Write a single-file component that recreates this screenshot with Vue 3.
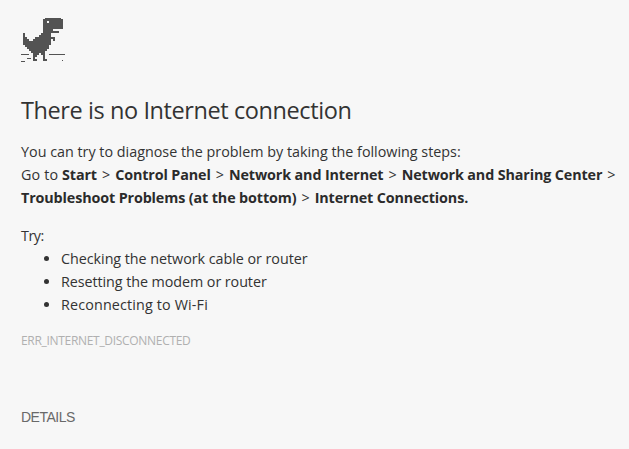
<script setup>
// Pixel-art dinosaur, one character per 2px cell
const rows = [
  '...........########.',
  '..........##########',
  '..........##.#######',
  '..........##########',
  '..........##########',
  '..........##########',
  '..........#####.....',
  '..........########..',
  '#........#####......',
  '#.......######......',
  '##....##########....',
  '###..#########.#....',
  '##############......',
  '##############......',
  '.############.......',
  '..###########.......',
  '...#########........',
  '....#######.........',
  '.....###.##.........',
  '.....##...#.........',
  '.....#....#.........',
  '.....##...##........',
]
const path = rows
  .map((row, y) =>
    [...row.matchAll(/#+/g)]
      .map((m) => `M${m.index * 2 + 2} ${y * 2}h${m[0].length * 2}v2h-${m[0].length * 2}z`)
      .join(''),
  )
  .join('')
const tips = [
  { text: 'Checking the network cable or router', cls: 'tip-a' },
  { text: 'Resetting the modem or router', cls: 'tip-b' },
  { text: 'Reconnecting to Wi-Fi', cls: 'tip-c' },
]
</script>

<template>
  <main class="page">
    <svg class="dino" width="46" height="45" viewBox="0 1 46 45" shape-rendering="crispEdges">
      <path :d="path" />
      <path d="M0 37h8v1H0zM28 37h16v1H28zM6 41h4v1H6zM0 44h4v1H0zM41 43h1v1h-1z" />
    </svg>
    <h1>There is no Internet connection</h1>
    <p class="steps">
      <span class="line">You can try to diagnose the problem by taking the following steps:</span>
      <span class="line"><span class="go">Go to</span> <b>Start</b> <i>&gt;</i> <b>Control Panel</b> <i>&gt;</i> <b>Network and Internet</b> <i>&gt;</i> <b>Network and Sharing Center</b> <i>&gt;</i></span>
      <span class="line"><b>Troubleshoot Problems (at the bottom)</b> <i>&gt;</i> <b>Internet Connections.</b></span>
    </p>
    <p class="try">Try:</p>
    <ul>
      <li v-for="t in tips" :key="t.text" :class="t.cls">{{ t.text }}</li>
    </ul>
    <p class="code">ERR_INTERNET_DISCONNECTED</p>
    <button class="details">DETAILS</button>
  </main>
</template>

<style>
body {
  background: #f7f7f7;
}
</style>

<style scoped>
.page {
  box-sizing: border-box;
  height: 449px;
  overflow: hidden;
  padding: 18px 0 0 21px;
  background: #f7f7f7;
  color: #333;
  font-family: 'Open Sans', 'Noto Sans', sans-serif;
  font-size: 14.33px;
  line-height: 23px;
}
.dino {
  display: block;
  fill: #535353;
}
h1 {
  margin: 32px 0 15px;
  font-size: 23.5px;
  font-weight: 400;
  line-height: 30px;
  letter-spacing: -0.41px;
  white-space: nowrap;
}
p {
  margin: 0;
}
.line {
  display: block;
  white-space: nowrap;
}
.go {
  letter-spacing: 0.16px;
}
b {
  font-weight: 700;
  color: #2b2b2b;
  letter-spacing: -0.12px;
}
i {
  margin: 0 1.3px;
  font-style: normal;
}
.try {
  margin-top: 15px;
  letter-spacing: -0.5px;
}
ul {
  margin: 0;
  padding: 0 0 0 40px;
}
.tip-a {
  letter-spacing: -0.04px;
}
.tip-b {
  letter-spacing: -0.07px;
}
.tip-c {
  letter-spacing: 0.15px;
}
.code {
  margin-top: 13px;
  font-size: 12px;
  letter-spacing: -0.31px;
  color: #b0b0b0;
}
.details {
  display: block;
  margin: 54px 0 0;
  padding: 0;
  border: 0;
  background: none;
  color: #696969;
  font: 14px/22px 'Liberation Sans', Arial, sans-serif;
  letter-spacing: -0.5px;
}
</style>
